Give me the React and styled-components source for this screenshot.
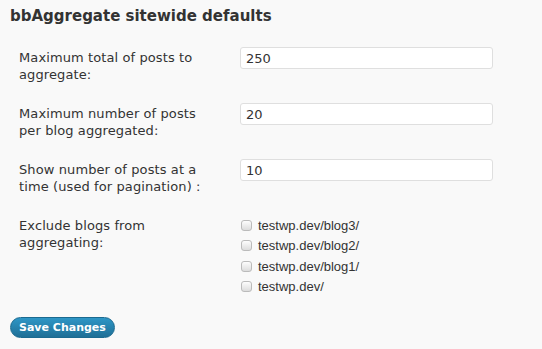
import React, { useState } from "react";
import styled, { createGlobalStyle } from "styled-components";

const Global = createGlobalStyle`
    html, body {
        margin: 0;
        padding: 0;
        background: #f9f9f9;
    }
    body {
        font-family: "DejaVu Sans", Verdana, sans-serif;
        color: #333;
    }
`

const Page = styled.div`
    width: 542px;
    height: 349px;
    box-sizing: border-box;
    padding: 6px 0 0 10px;
    overflow: hidden;
`

const Title = styled.h3`
    margin: 0;
    font-size: 15px;
    font-weight: bold;
    line-height: 20px;
    color: #333;
`

const Form = styled.div`
    display: grid;
    grid-template-columns: 221px 253px;
    row-gap: 20px;
    margin-top: 21px;
    padding-left: 9px;
`

const Label = styled.div`
    font-size: 13px;
    line-height: 17px;
    letter-spacing: 0.1px;
    padding-top: 2px;
    padding-right: 24px;
`

const Input = styled.input`
    box-sizing: border-box;
    width: 100%;
    height: 22px;
    border: 1px solid #dfdfdf;
    border-radius: 3px;
    background: #fff;
    padding: 0 5px;
    font-family: "DejaVu Sans", Verdana, sans-serif;
    font-size: 13px;
    color: #333;
    outline: none;
`

const CheckList = styled.div`
    display: flex;
    flex-direction: column;
    gap: 4px;
    padding-top: 2px;
`

const CheckRow = styled.label`
    display: flex;
    align-items: center;
    gap: 6px;
    height: 16.5px;
    font-family: "Liberation Sans", Arial, sans-serif;
    font-size: 13px;
    color: #333;
`

const Box = styled.input`
    appearance: none;
    margin: 0 0 0 1px;
    width: 11px;
    height: 11px;
    border: 1px solid #bbb;
    border-radius: 3px;
    background: linear-gradient(#fdfdfd, #dcdcdc);
    box-sizing: border-box;
    &:checked {
        background: linear-gradient(#d8ecf7, #9cc6de);
    }
`

const Button = styled.button`
    margin-top: 22px;
    height: 21px;
    padding: 0 8px;
    border: 1px solid #1b6a90;
    border-radius: 11px;
    background: linear-gradient(#2e96c6, #1f6f96);
    color: #fff;
    font-family: "DejaVu Sans", Verdana, sans-serif;
    font-size: 11px;
    font-weight: bold;
    line-height: 19px;
    cursor: pointer;
`

const blogs = ["testwp.dev/blog3/", "testwp.dev/blog2/", "testwp.dev/blog1/", "testwp.dev/"];

const App = () => {
    const [total, setTotal] = useState("250");
    const [perBlog, setPerBlog] = useState("20");
    const [perPage, setPerPage] = useState("10");

    return (
        <Page>
            <Global />
            <Title>bbAggregate sitewide defaults</Title>
            <Form>
                <Label>Maximum total of posts to aggregate:</Label>
                <div><Input value={total} onChange={(e) => setTotal(e.target.value)} /></div>

                <Label>Maximum number of posts per blog aggregated:</Label>
                <div><Input value={perBlog} onChange={(e) => setPerBlog(e.target.value)} /></div>

                <Label>Show number of posts at a time (used for pagination) :</Label>
                <div><Input value={perPage} onChange={(e) => setPerPage(e.target.value)} /></div>

                <Label>Exclude blogs from aggregating:</Label>
                <CheckList>
                    {blogs.map((b) => (
                        <CheckRow key={b}>
                            <Box type="checkbox" />
                            {b}
                        </CheckRow>
                    ))}
                </CheckList>
            </Form>
            <Button>Save Changes</Button>
        </Page>
    )
}

export default App;
